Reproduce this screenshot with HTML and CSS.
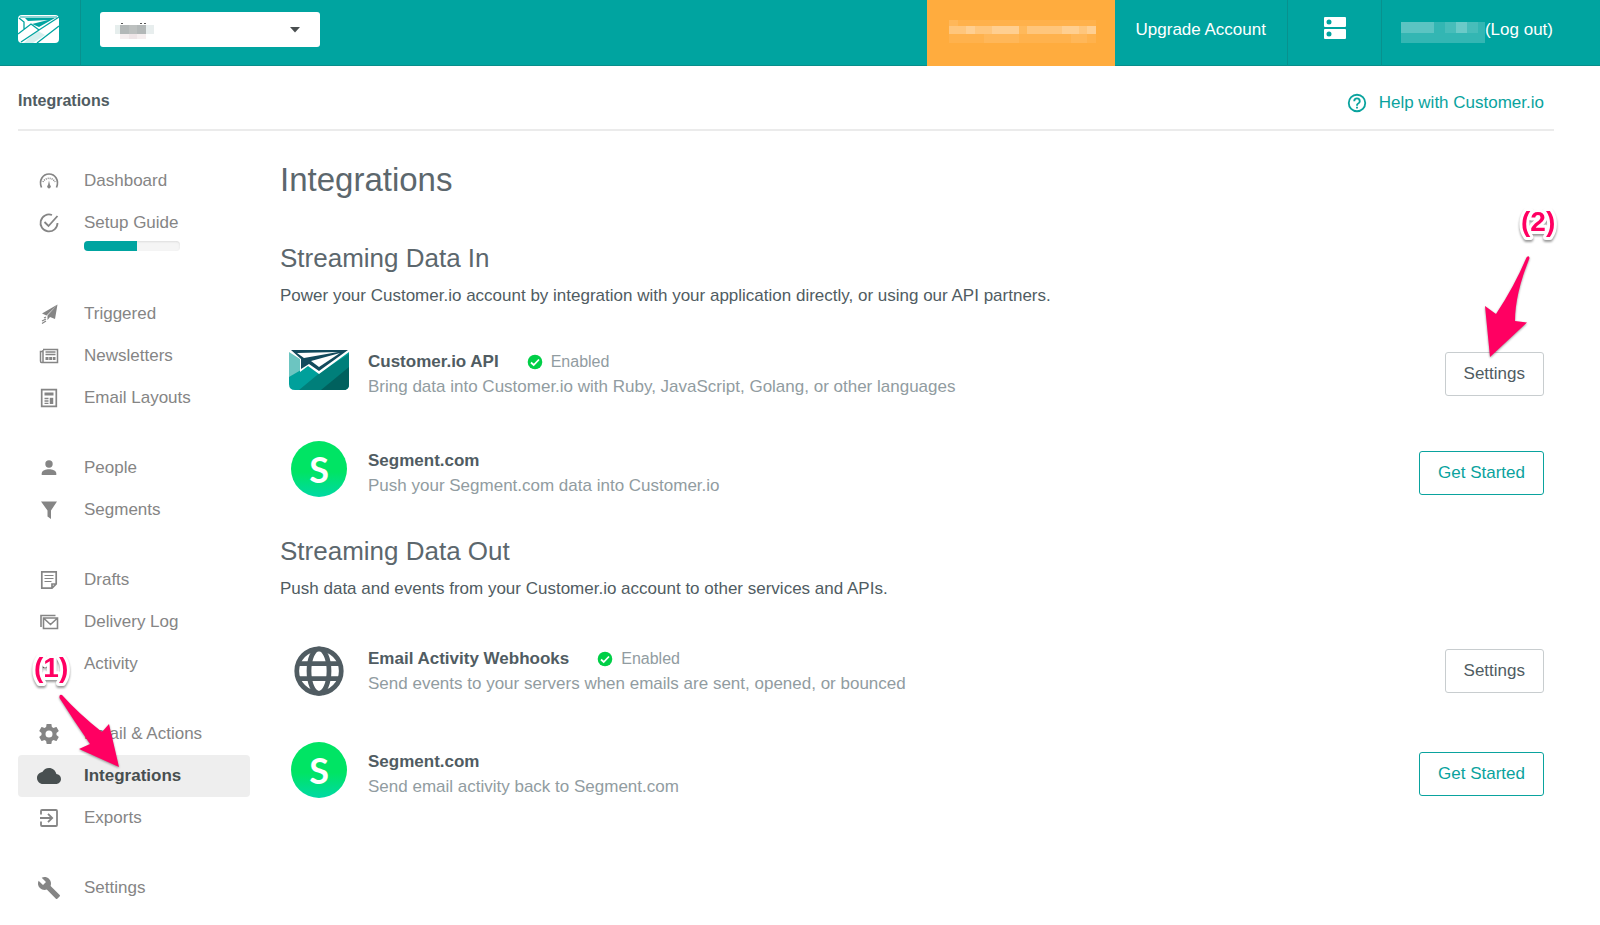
FILE: index.html
```html
<!DOCTYPE html>
<html lang="en">
<head>
<meta charset="utf-8">
<title>Integrations</title>
<link rel="stylesheet" href="styles.css">
</head>
<body>
<header class="topbar">
  <a class="topbar-logo" href="#" aria-label="Home">
    <svg width="42" height="28" viewBox="0 0 42 28">
      <rect x="0" y="0" width="41" height="28" rx="4" fill="#fff"/>
      <path d="M12 22 20 16 27 20 15 28H6Z" fill="#d5efee"/>
      <path d="M7 3H37L21 12 14 9 30 5 10 6Z" fill="#00a4a0"/>
      <path d="M1 3 6 7V14M0 19 13 9 21 15 41 2M3 27 21 15M19 28 41 11" fill="none" stroke="#00a4a0" stroke-width="1.3"/>
      <path d="M2 2H39" stroke="#00a4a0" stroke-width=".9"/>
    </svg>
  </a>
  <div class="env">
    <select class="env-select" aria-label="Environment"><option></option></select>
    <svg class="env-mask" width="40" height="18" viewBox="0 0 40 18" shape-rendering="crispEdges" aria-hidden="true">
      <path d="M0 2H5V11H0Z" fill="#e6eeed"/><path d="M5 2H31V11H5Z" fill="#b3b8b8"/><path d="M14 2H22V11H14Z" fill="#bcc0bf"/><path d="M31 2H39V11H31Z" fill="#e8eeee"/>
      <path d="M5 11H31V16H5Z" fill="#f5eeef"/><path d="M14 11H22V16H14Z" fill="#eee5e7"/>
      <path d="M6 0H8V1H6ZM25 0H27V1H25ZM29 0H31V1H29Z" fill="#555"/>
    </svg>
    <svg class="env-caret" width="10" height="6" viewBox="0 0 10 6" aria-hidden="true"><path d="M0 0H10L5 5.500Z" fill="#4a4f50"/></svg>
  </div>
  <a class="topbar-trial" href="#" aria-label="Trial status">
    <svg width="147" height="31" viewBox="0 0 147 31" shape-rendering="crispEdges" aria-hidden="true">
      <g fill="#fff"><path opacity=".14" d="M0 1H9V7H0Z"/><path opacity=".07" d="M9 1H147V7H9Z"/><path opacity=".32" d="M0 7H147V15H0Z"/><path opacity=".16" d="M17 7H26V15H17ZM43 7H70V15H43ZM113 7H130V15H113ZM138 7H147V15H138Z"/><path opacity=".08" d="M0 15H147V24H0Z"/><path opacity=".07" d="M35 15H70V24H35ZM122 15H138V24H122Z"/></g>
      <path d="M70 7H78V15H70Z" fill="#ffb95b"/>
    </svg>
  </a>
  <a class="topbar-link" href="#">Upgrade Account</a>
  <a class="topbar-icon" href="#" aria-label="Workspaces">
    <svg width="22" height="22" viewBox="0 0 22 22"><path fill="#fff" fill-rule="evenodd" d="M1 0H21Q22 0 22 1V9Q22 10 21 10H1Q0 10 0 9V1Q0 0 1 0ZM5 2.500A2.500 2.500 0 1 0 5 7.500 2.500 2.500 0 1 0 5 2.500ZM1 12H21Q22 12 22 13V21Q22 22 21 22H1Q0 22 0 21V13Q0 12 1 12ZM5 14.500A2.500 2.500 0 1 0 5 19.500 2.500 2.500 0 1 0 5 14.500Z"/></svg>
  </a>
  <a class="topbar-user" href="#">
    <svg width="84" height="21" viewBox="0 0 84 21" shape-rendering="crispEdges" aria-hidden="true"><g fill="#fff"><path opacity=".2" d="M0 0H84V21H0Z"/><path opacity=".2" d="M0 0H33V11H0ZM55 0H66V11H55Z"/><path opacity=".1" d="M44 0H77V11H44Z"/></g></svg>
    <span>(Log out)</span>
  </a>
</header>

<div class="page">
  <div class="crumbs">
    <strong class="crumbs-title">Integrations</strong>
    <a class="help" href="#">
      <svg width="22" height="22" viewBox="0 0 24 24" fill="currentColor"><path d="M11 18h2v-2h-2v2zm1-16a10 10 0 1 0 0 20 10 10 0 0 0 0-20zm0 18a8 8 0 1 1 0-16 8 8 0 0 1 0 16zm0-14a4 4 0 0 0-4 4h2a2 2 0 1 1 4 0c0 2-3 1.750-3 5h2c0-2.250 3-2.500 3-5a4 4 0 0 0-4-4z"/></svg>
      Help with Customer.io
    </a>
  </div>

  <div class="layout">
    <nav class="sidebar">
      <div class="nav-group">
        <a class="nav-item" href="#">
          <svg class="nav-icon" viewBox="0 0 22 22"><path d="M3.500 17.500C.5 10 5 4 11 4s10.500 6 7.500 13.500" fill="none" stroke="currentColor" stroke-width="1.700"/><path d="M5 12a6.500 6 0 0 1 12 0" fill="none" stroke="currentColor" stroke-width="1.600" stroke-dasharray="1 1"/><path d="M11 10.500 12 15a1.800 1.800 0 1 1-2 0Z" fill="currentColor"/></svg>
          <span class="nav-label">Dashboard</span>
        </a>
        <a class="nav-item" href="#">
          <svg class="nav-icon" viewBox="0 0 22 22" fill="none" stroke="currentColor" stroke-width="1.800"><path d="M19.500 11A8.500 8.500 0 1 1 14 3"/><path d="M6.500 10 10.500 14 19.500 4"/></svg>
          <span class="nav-label">Setup Guide<progress class="setup-progress" max="100" value="55" aria-label="Setup progress"></progress></span>
        </a>
      </div>
      <div class="nav-group">
        <a class="nav-item" href="#">
          <svg class="nav-icon" viewBox="0 0 22 22"><path d="M19.500 1.500 4 10.500 8.500 12.500ZM19.500 1.500 9.500 12.500V17l2.500-3L17 16Z" fill="currentColor"/><path d="m8 14-2 1m2 1-4 2m4 0-4 2.500" stroke="currentColor" stroke-width="1.200"/></svg>
          <span class="nav-label">Triggered</span>
        </a>
        <a class="nav-item" href="#">
          <svg class="nav-icon" viewBox="0 0 22 22" fill="none" stroke="currentColor" stroke-width="1.500"><path d="M5 5V17M5 4.500H19.500V17.500H3.500Q2.500 17.500 2.500 16V6.500H5" /><path d="M7.500 7H17.500M7.500 9.500H17.500" /><path d="M7.500 13.500H17.500" stroke-width="3" stroke-dasharray="3 .7"/></svg>
          <span class="nav-label">Newsletters</span>
        </a>
        <a class="nav-item" href="#">
          <svg class="nav-icon" viewBox="0 0 22 22" fill="none" stroke="currentColor"><path d="M3.700 2.700H18.300V19.300H3.700Z" stroke-width="1.700"/><path d="M6.500 7H15.500" stroke-width="3"/><path d="M6.500 11.500H10.500M6.500 14H10.500M6.500 16.300H10.500" stroke-width="1.300"/><path d="M13.500 10.800V17" stroke-width="3.500"/></svg>
          <span class="nav-label">Email Layouts</span>
        </a>
      </div>
      <div class="nav-group">
        <a class="nav-item" href="#">
          <svg class="nav-icon" viewBox="0 0 22 22" fill="currentColor"><circle cx="11" cy="7" r="3.700"/><path d="M3.700 18V16.500C3.700 13.500 8 12.300 11 12.300s7.300 1.200 7.300 4.200V18Z"/></svg>
          <span class="nav-label">People</span>
        </a>
        <a class="nav-item" href="#">
          <svg class="nav-icon" viewBox="0 0 22 22" fill="currentColor"><path d="M3 2.500H19L13 11.500V20L9.500 17.500V11.500Z"/></svg>
          <span class="nav-label">Segments</span>
        </a>
      </div>
      <div class="nav-group">
        <a class="nav-item" href="#">
          <svg class="nav-icon" viewBox="0 0 22 22" fill="none" stroke="currentColor" stroke-width="1.700"><path d="M3.800 2.800H18.200V15L14 19.200H3.800ZM18 15H14V19"/><path d="M6.500 6.500H15.500M6.500 9.500H15.500M6.500 12.500H13.500" stroke-width="1.200"/></svg>
          <span class="nav-label">Drafts</span>
        </a>
        <a class="nav-item" href="#">
          <svg class="nav-icon" viewBox="0 0 22 22" fill="none" stroke="currentColor" stroke-width="1.600"><path d="M3 16V4.500H17.500M5.500 7H19.500V17.500H5.500ZM6 7.500 12.500 13.500 19 7.500"/></svg>
          <span class="nav-label">Delivery Log</span>
        </a>
        <a class="nav-item" href="#">
          <svg class="nav-icon" viewBox="0 0 22 22" fill="none" stroke="currentColor" stroke-width="1.500"><path d="M5.500 15V10.500H9V15" /></svg>
          <span class="nav-label">Activity</span>
        </a>
      </div>
      <div class="nav-group">
        <a class="nav-item" href="#">
          <svg class="nav-icon" viewBox="1 1 22 22" fill="currentColor"><path d="M19.430 12.980c.04-.32.07-.64.07-.98s-.03-.66-.07-.98l2.110-1.650c.19-.15.24-.42.12-.64l-2-3.460c-.12-.22-.39-.3-.61-.22l-2.490 1c-.52-.4-1.080-.73-1.690-.98l-.38-2.650C14.460 2.180 14.250 2 14 2h-4c-.25 0-.46.18-.49.42l-.38 2.650c-.61.25-1.170.59-1.690.98l-2.490-1c-.23-.09-.49 0-.61.22l-2 3.460c-.13.22-.07.49.12.64l2.110 1.650c-.04.32-.07.65-.07.98s.03.66.07.98l-2.110 1.650c-.19.15-.24.42-.12.64l2 3.460c.12.22.39.3.61.22l2.490-1c.52.4 1.080.73 1.690.98l.38 2.650c.03.24.24.42.49.42h4c.25 0 .46-.18.49-.42l.38-2.650c.61-.25 1.170-.59 1.690-.98l2.490 1c.23.09.49 0 .61-.22l2-3.460c.12-.22.07-.49-.12-.64zM12 15.500a3.500 3.500 0 1 1 0-7 3.500 3.500 0 0 1 0 7z"/></svg>
          <span class="nav-label">Email &amp; Actions</span>
        </a>
        <a class="nav-item nav-item-active" href="#" aria-current="page">
          <svg class="nav-icon" viewBox="1 1 22 22" fill="currentColor"><path d="M19.350 10.040C18.670 6.590 15.640 4 12 4 9.110 4 6.600 5.640 5.350 8.040 2.340 8.360 0 10.910 0 14c0 3.310 2.690 6 6 6h13c2.760 0 5-2.240 5-5 0-2.640-2.050-4.780-4.650-4.960z"/></svg>
          <span class="nav-label">Integrations</span>
          <svg class="pointer pointer-nav" width="110" height="140" viewBox="20 640 110 140" aria-hidden="true">
            <text class="pointer-text" x="34" y="677">(1)</text>
            <path class="pointer-arrow" d="M62 695Q78 713 102 732L109 724 119 767 79 749 90 744Q74 721 59.500 698 59 694 62 695Z"/>
          </svg>
        </a>
        <a class="nav-item" href="#">
          <svg class="nav-icon" viewBox="0 0 22 22" fill="none" stroke="currentColor" stroke-width="1.800"><path d="M3 7.500V4Q3 3 4 3H18Q19 3 19 4V18Q19 19 18 19H4Q3 19 3 18V14.500M2 11H13.500M10 6.800 14.200 11 10 15.200"/></svg>
          <span class="nav-label">Exports</span>
        </a>
      </div>
      <div class="nav-group">
        <a class="nav-item" href="#">
          <svg class="nav-icon" viewBox="1 1 22 22" fill="currentColor"><path d="M22.700 19l-9.100-9.100c.9-2.300.4-5-1.500-6.900-2-2-5-2.400-7.400-1.300L9 6 6 9 1.600 4.700C.4 7.100.9 10.100 2.900 12.100c1.900 1.900 4.600 2.400 6.900 1.500l9.100 9.100c.4.4 1 .4 1.400 0l2.300-2.300c.5-.4.5-1.100.1-1.400z"/></svg>
          <span class="nav-label">Settings</span>
        </a>
      </div>
    </nav>

    <main class="content">
      <h1 class="title">Integrations</h1>

      <section class="section">
        <h2 class="section-title">Streaming Data In</h2>
        <p class="section-text">Power your Customer.io account by integration with your application directly, or using our API partners.</p>
        <div class="service">
          <div class="service-icon">
            <svg width="60" height="56" viewBox="0 0 60 56">
              <defs><clipPath id="env"><path d="M0 8H60V42Q60 48 54 48H6Q0 48 0 42Z"/></clipPath></defs>
              <g clip-path="url(#env)">
                <path d="M0 8H60V48H0Z" fill="#00a09b"/>
                <path d="M0 8 12 16V28L0 35Z" fill="#6cc5c1"/>
                <path d="M10 48 33 29 60 12V48Z" fill="#007f7a"/>
                <path d="M32 48 60 25V48Z" fill="#00615e"/>
                <path d="M0 8H60V10L30 32 19 24 11 30V17L0 10Z" fill="#fff"/>
                <path d="M2 8H59L30 29 20 22 12 27V17Z" fill="#124a5c"/>
                <path d="M8 11 49 10 15 16ZM22 19 51 11 30 25Z" fill="#fff"/>
              </g>
            </svg>
          </div>
          <div class="service-body">
            <h3 class="service-name">Customer.io API <span class="status"><svg width="16" height="16" viewBox="0 0 16 16"><circle cx="8" cy="8" r="7.300" fill="#00cf47"/><path d="M4 8.500 6.700 11 12 5.500" fill="none" stroke="#fff" stroke-width="1.800"/></svg>Enabled</span></h3>
            <p class="service-text">Bring data into Customer.io with Ruby, JavaScript, Golang, or other languages</p>
          </div>
          <div class="service-action">
            <button class="btn" type="button">Settings</button>
            <svg class="pointer pointer-button" width="90" height="170" viewBox="1475 195 90 170" aria-hidden="true">
              <text class="pointer-text" x="1521" y="231">(2)</text>
              <path class="pointer-arrow" d="M1526.500 257.500Q1514 287 1496 314L1485 306 1490 357 1527 322.500 1515 321Q1515 294 1529.500 258 1529 255 1526.500 257.500Z"/>
            </svg>
          </div>
        </div>
        <div class="service">
          <div class="service-icon"><span class="segment-logo">S</span></div>
          <div class="service-body">
            <h3 class="service-name">Segment.com</h3>
            <p class="service-text">Push your Segment.com data into Customer.io</p>
          </div>
          <button class="btn btn-primary" type="button">Get Started</button>
        </div>
      </section>

      <section class="section">
        <h2 class="section-title">Streaming Data Out</h2>
        <p class="section-text">Push data and events from your Customer.io account to other services and APIs.</p>
        <div class="service service-tall">
          <div class="service-icon">
            <svg width="60" height="60" viewBox="0 0 24 24" fill="none" stroke="#505c62" stroke-width="1.900"><circle cx="12" cy="12" r="8.900"/><ellipse cx="12" cy="12" rx="4" ry="8.900"/><path d="M3.500 9H20.500M3.500 15H20.500"/></svg>
          </div>
          <div class="service-body">
            <h3 class="service-name">Email Activity Webhooks <span class="status"><svg width="16" height="16" viewBox="0 0 16 16"><circle cx="8" cy="8" r="7.300" fill="#00cf47"/><path d="M4 8.500 6.700 11 12 5.500" fill="none" stroke="#fff" stroke-width="1.800"/></svg>Enabled</span></h3>
            <p class="service-text">Send events to your servers when emails are sent, opened, or bounced</p>
          </div>
          <button class="btn" type="button">Settings</button>
        </div>
        <div class="service">
          <div class="service-icon"><span class="segment-logo">S</span></div>
          <div class="service-body">
            <h3 class="service-name">Segment.com</h3>
            <p class="service-text">Send email activity back to Segment.com</p>
          </div>
          <button class="btn btn-primary" type="button">Get Started</button>
        </div>
      </section>
    </main>
  </div>
</div>
</body>
</html>
```
FILE: styles.css
```css
* { box-sizing: border-box; }
body {
  margin: 0;
  background: #fff;
  color: #505c62;
  font: 17px/24px "Liberation Sans", Arial, sans-serif;
}
a { color: inherit; text-decoration: none; }
svg { display: block; flex: none; }
h1, h2, h3, p { margin: 0; }

.topbar {
  display: flex;
  height: 66px;
  background: #00a4a0;
  color: #fff;
  box-shadow: inset 0 -1px #088e8b;
}
.topbar-logo {
  width: 81px;
  padding: 15px 0 0 18px;
  border-right: 1px solid #08918e;
}
.env {
  position: relative;
  width: 220px;
  height: 35px;
  margin: 12px auto 0 19px;
}
.env-select {
  appearance: none;
  width: 100%;
  height: 100%;
  padding: 0 32px 0 16px;
  border: 0;
  border-radius: 3px;
  background: #fff;
  font: inherit;
}
.env-mask, .env-caret { position: absolute; pointer-events: none; }
.env-mask { left: 15px; top: 11px; }
.env-caret { right: 20px; top: 15px; }
.topbar-trial {
  width: 188px;
  padding: 19px 20px 0 22px;
  background: #ffac3e;
}
.topbar-link {
  padding: 18px 21px 0;
}
.topbar-icon {
  width: 95px;
  padding: 17px 36px 0;
  border-left: 1px solid #08918e;
  border-right: 1px solid #08918e;
}
.topbar-user {
  display: flex;
  align-items: flex-start;
  padding: 18px 47px 0 19px;
}
.topbar-user svg { margin-top: 4px; }

.page { padding: 0 46px 0 18px; }
.crumbs {
  display: flex;
  justify-content: space-between;
  align-items: center;
  height: 65px;
  margin-bottom: 29px;
  padding: 6px 10px 0 0;
  border-bottom: 2px solid #ebebeb;
}
.crumbs-title { font-size: 16px; }
.help {
  display: flex;
  align-items: center;
  gap: 11px;
  margin-top: 4px;
  color: #0aa39e;
}

.layout { display: flex; gap: 30px; }
.sidebar { flex: 0 0 232px; color: #858585; }
.nav-group { margin-bottom: 28px; }
.nav-item {
  position: relative;
  display: flex;
  min-height: 42px;
  padding: 9px 0 8px 20px;
  gap: 24px;
  border-radius: 4px;
}
.nav-icon {
  width: 22px;
  height: 22px;
  margin-top: 1px;
  overflow: visible;
}
.nav-item-active {
  background: #eee;
  color: #484f50;
  font-weight: bold;
}
.setup-progress {
  appearance: none;
  display: block;
  width: 96px;
  height: 10px;
  margin: 6px 0;
  border: 0;
}
.setup-progress::-webkit-progress-bar {
  overflow: hidden;
  border-radius: 4px;
  background: #f5f5f5;
  box-shadow: inset 0 1px 2px #ddd;
}
.setup-progress::-webkit-progress-value { background: #00a4a0; }

.content { flex: 1; min-width: 0; padding-right: 10px; }
.title {
  color: #5c676d;
  font-size: 33px;
  line-height: 40px;
  font-weight: normal;
}
.section { margin-top: 42px; }
.section + .section { margin-top: 30px; }
.section-title {
  color: #5c676d;
  font-size: 26px;
  line-height: 32px;
  font-weight: normal;
}
.section-text { margin: 10px 0 34px; }
.service {
  display: flex;
  align-items: center;
  gap: 10px;
  min-height: 64px;
  margin-bottom: 35px;
}
.service:last-child { margin-bottom: 0; }
.service-icon {
  display: flex;
  justify-content: center;
  flex: 0 0 78px;
  align-self: flex-start;
}
.service-tall { min-height: 72px; }
.service-tall .service-icon { align-self: center; }
.segment-logo {
  width: 56px;
  height: 56px;
  border-radius: 50%;
  background: linear-gradient(#00e464 55%, #00d9a4);
  color: #fff;
  font: bold 36px/56px Lato, sans-serif;
  text-align: center;
}
.service-body { flex: 1; }
.service-name {
  display: flex;
  gap: 28px;
  font-size: 17px;
  line-height: 25px;
}
.status {
  display: flex;
  align-items: center;
  gap: 8px;
  color: #919ca1;
  font-size: 16px;
  font-weight: normal;
}
.service-text { color: #919ca1; line-height: 25px; }
.service-action { position: relative; }
.btn {
  display: block;
  height: 44px;
  padding: 0 18px;
  border: 1px solid #c8cdcf;
  border-radius: 3px;
  background: #fff;
  color: #505c62;
  font: inherit;
}
.btn-primary { border-color: #0aa39e; color: #0aa39e; }

.pointer {
  position: absolute;
  pointer-events: none;
  overflow: visible;
  z-index: 1;
}
.pointer-nav { left: 2px; top: -115px; }
.pointer-button { right: -21px; top: -157px; }
.pointer-text {
  fill: #ff0062;
  stroke: #fff;
  stroke-width: 6px;
  stroke-linejoin: round;
  paint-order: stroke;
  font: bold 28px "Liberation Sans", Arial, sans-serif;
  filter: drop-shadow(0 2px 1px rgba(0, 0, 0, .4));
}
.pointer-arrow {
  fill: #ff0062;
  filter: drop-shadow(0 1px 1px rgba(0, 0, 0, .4));
}
```
